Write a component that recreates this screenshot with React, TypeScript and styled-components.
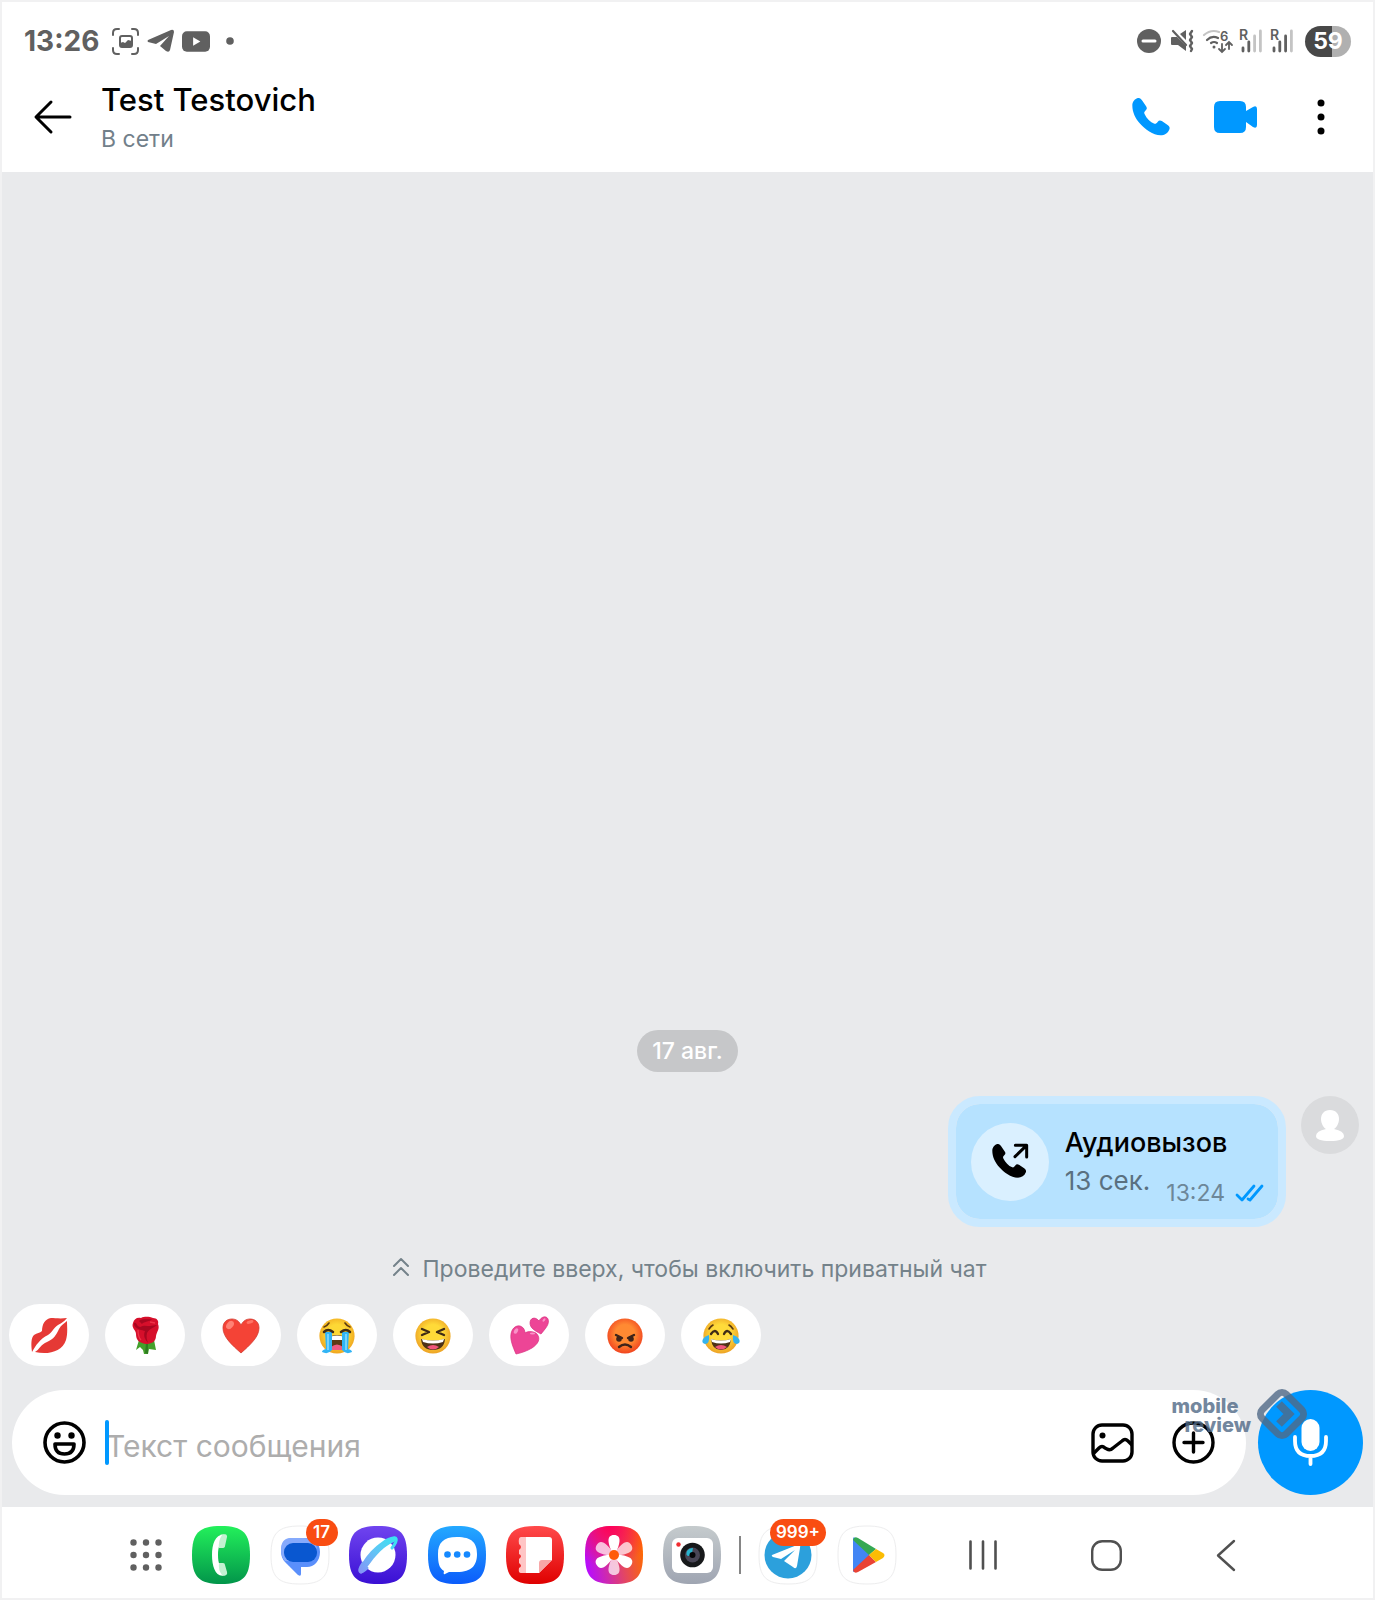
import React from "react";
import styled, { createGlobalStyle } from "styled-components";

const Global = createGlobalStyle`
  * { box-sizing: border-box; }
  body { margin: 0; background: #fff; font-family: Inter, "Liberation Sans", sans-serif; }
  button { border: 0; padding: 0; background: none; font: inherit; color: inherit; cursor: pointer; }
  svg { display: block; flex: none; overflow: visible; }
`;

const Screen = styled.div`
  min-height: 100vh;
  display: flex;
  flex-direction: column;
  border: 2px solid #f1f1f2;
  background: #fff;
`;

const StatusBar = styled.div`
  display: flex;
  align-items: center;
  justify-content: space-between;
  height: 76px;
  padding: 2px 22px 0;
  color: #606060;
`;

const StatusGroup = styled.div<{ $gap: number }>`
  display: flex;
  align-items: center;
  gap: ${(p) => p.$gap}px;
`;

const Clock = styled.time`
  font-size: 28px;
  line-height: 34px;
  font-weight: 700;
  margin-right: 5px;
`;

const Battery = styled.div`
  width: 46px;
  height: 31px;
  margin-left: 4px;
  border-radius: 16px;
  background: linear-gradient(90deg, #484848 58%, #b0b0b0 58%);
  color: #fff;
  font-size: 23px;
  line-height: 31px;
  font-weight: 700;
  text-align: center;
`;

const Header = styled.header`
  display: flex;
  align-items: center;
  height: 94px;
  padding: 0 28px 16px 32px;
`;

const Back = styled.button`
  width: 67px;
`;

const Contact = styled.div`
  flex: 1;
  min-width: 0;
`;

const Name = styled.h1`
  margin: 0;
  font-size: 31px;
  line-height: 44px;
  font-weight: 500;
  color: #000;
`;

const Presence = styled.div`
  font-size: 23px;
  line-height: 34px;
  color: #72808a;
`;

const HeaderActions = styled.div`
  display: flex;
  align-items: center;
  gap: 44px;
`;

const MoreButton = styled.button`
  display: flex;
  justify-content: center;
  width: 48px;
  margin-left: -4px;
`;

const Chat = styled.main`
  flex: 1;
  display: flex;
  flex-direction: column;
  justify-content: flex-end;
  background: #e9eaec;
`;

const DateChip = styled.div`
  align-self: center;
  padding: 0 15px;
  border-radius: 21px;
  background: #c6c7c9;
  color: #fff;
  font-size: 23px;
  line-height: 42px;
  font-weight: 500;
`;

const MessageRow = styled.div`
  display: flex;
  justify-content: flex-end;
  align-items: flex-start;
  gap: 15px;
  padding: 24px 14px 25px;
`;

const Bubble = styled.article`
  display: flex;
  align-items: center;
  gap: 16px;
  height: 131px;
  padding: 0 15px;
  border: 8px solid #cae9ff;
  border-radius: 32px;
  background: #b6e2ff;
  background-clip: padding-box;
`;

const CallBadge = styled.div`
  display: grid;
  place-items: center;
  flex: none;
  width: 78px;
  height: 78px;
  border-radius: 50%;
  background: #daf0ff;
`;

const CallText = styled.div`
  flex: 1;
`;

const CallTitle = styled.div`
  font-size: 27px;
  line-height: 38px;
  font-weight: 500;
  color: #000;
`;

const CallLine = styled.div`
  display: flex;
  justify-content: space-between;
  align-items: flex-start;
  gap: 16px;
`;

const Duration = styled.span`
  font-size: 26px;
  line-height: 38px;
  color: #5a7080;
`;

const Receipt = styled.span`
  display: flex;
  align-items: center;
  gap: 10px;
  height: 38px;
  padding-top: 24px;
  font-size: 23px;
  line-height: 14px;
  color: #6d8799;
`;

const Avatar = styled.div`
  display: grid;
  place-items: center;
  width: 58px;
  height: 58px;
  border-radius: 50%;
  background: #dadbdd;
`;

const Hint = styled.div`
  display: flex;
  justify-content: center;
  align-items: center;
  gap: 14px;
  padding-left: 4px;
  color: #74828a;
  font-size: 23px;
  line-height: 34px;
`;

const Reactions = styled.div`
  display: flex;
  gap: 16px;
  padding: 18px 7px 24px;
`;

const Reaction = styled.button`
  display: grid;
  place-items: center;
  width: 80px;
  height: 62px;
  border-radius: 31px;
  background: #fff;
`;

const Composer = styled.form`
  position: relative;
  display: flex;
  align-items: center;
  gap: 12px;
  padding: 0 10px 12px;
`;

const Field = styled.div`
  flex: 1;
  min-width: 0;
  display: flex;
  align-items: center;
  height: 105px;
  padding: 0 31px;
  border-radius: 53px;
  background: #fff;
`;

const InputWrap = styled.label`
  position: relative;
  flex: 1;
  min-width: 0;
  margin: 0 20px;
`;

const TextInput = styled.input`
  display: block;
  width: 100%;
  height: 46px;
  padding: 6px 0 0;
  border: 0;
  outline: 0;
  background: none;
  font: 400 30px/40px Inter, "Liberation Sans", sans-serif;
  color: #000;
  caret-color: #0098ff;
  &::placeholder { color: #adadad; opacity: 1; }
`;

const Caret = styled.span`
  position: absolute;
  left: -1px;
  top: 0;
  width: 4px;
  height: 45px;
  border-radius: 2px;
  background: #0098ff;
`;

const FieldActions = styled.div`
  display: flex;
  align-items: center;
  gap: 38px;
`;

const MicButton = styled.button`
  display: grid;
  place-items: center;
  width: 105px;
  height: 105px;
  border-radius: 50%;
  background: #0098ff;
`;

const Watermark = styled.div`
  position: absolute;
  right: 64px;
  top: -3px;
  display: flex;
  gap: 4px;
  opacity: 0.8;
  color: #516a87;
  pointer-events: none;
`;

const WatermarkText = styled.div`
  padding-top: 10px;
  font-size: 20px;
  line-height: 19px;
  font-weight: 800;
`;

const WatermarkLine = styled.div<{ $indent?: boolean }>`
  padding-left: ${(p) => (p.$indent ? 13 : 0)}px;
`;

const Dock = styled.nav`
  display: flex;
  align-items: center;
  justify-content: space-between;
  height: 91px;
  padding: 5px 137px 0 128px;
`;

const Apps = styled.div`
  display: flex;
  align-items: center;
`;

const Pinned = styled.div`
  display: flex;
  justify-content: space-between;
  width: 529px;
  margin: 0 18px 0 29px;
`;

const Recent = styled.div`
  display: flex;
  gap: 21px;
  margin-left: 18px;
`;

const AppButton = styled.button`
  position: relative;
  width: 58px;
  height: 58px;
`;

const Badge = styled.span<{ $wide?: boolean }>`
  position: absolute;
  top: -7px;
  left: ${(p) => (p.$wide ? 11 : 35)}px;
  min-width: 32px;
  padding: 0 6px;
  border-radius: 14px;
  background: #f94d12;
  color: #fff;
  font-size: 17px;
  line-height: 27px;
  font-weight: 600;
  text-align: center;
`;

const Divider = styled.span`
  width: 2px;
  height: 38px;
  background: #858585;
`;

const SystemKeys = styled.div`
  display: flex;
  align-items: center;
  justify-content: space-between;
  width: 267px;
`;

const HANDSET =
  "M1 22C1 10 9 2 18 0C24-1 28 4 31 9L42 25C45 30 44 33 40 37C36 41 35 43 37 47C43 60 54 71 66 76C70 77 72 75 76 70C79 66 83 65 88 68L106 80C111 84 112 88 110 93C106 104 96 110 84 110C62 110 38 92 24 76C10 60 1 42 1 22Z";
const SQUIRCLE = "M29 0C51 0 58 7 58 29S51 58 29 58S0 51 0 29S7 0 29 0Z";

const Face = ({ id, inner, outer, children }: { id: string; inner: string; outer: string; children: React.ReactNode }) => (
  <svg width="38" height="38" viewBox="0 0 38 38">
    <defs>
      <radialGradient id={id} cx=".5" cy=".45" r=".55">
        <stop offset=".5" stopColor={inner} />
        <stop offset="1" stopColor={outer} />
      </radialGradient>
    </defs>
    <circle cx="19" cy="20" r="17.6" fill={`url(#${id})`} />
    {children}
  </svg>
);

const Lips = () => (
  <svg width="38" height="38" viewBox="0 0 38 38">
    <path fill="#e53935" d="M2 36C1 28 1 22 4 19C7 17 10 17 12 15C12 8 15 3 21 2C25 2 30 3 37 2C34 6 31 7 28 9C23 12 23 16 18 19C10 23 6 29 2 36Z" />
    <path fill="#e53935" d="M5 36C9 34 11 28 17 26C24 23 26 19 29 13C31 9 35 7 37 5C37 11 38 17 36 24C32 36 18 39 5 36Z" />
  </svg>
);

const Rose = () => (
  <svg width="38" height="38" viewBox="0 0 38 38">
    <path fill="#43a02b" d="M13 24L10 34L14 31L17 34L18 38H22L23 33L30 34L28 24Z" />
    <path fill="#2e7d20" d="M20 27L19 37L22 38L22 28Z" />
    <path fill="#d60f2b" d="M7 7C8 3 11 1 15 2C19 0 24 1 27 2C31 2 33 5 32 8C34 13 31 15 30 20C30 26 25 28 20 28C13 27 10 24 10 18C10 14 5 12 7 7Z" />
    <path fill="#a80720" d="M8 7C11 6 10 10 14 11C18 9 20 10 24 10L31 9C28 12 24 12 21 17C20 21 21 24 22 27C19 23 17 20 19 15C16 14 11 14 8 9Z" />
    <path fill="#a80720" d="M13 5C17 2 22 4 26 3C24 6 18 5 16 8Z" />
    <path fill="none" stroke="#ef3347" strokeWidth="1.3" d="M12 14C12 19 13 22 15 24M24 6L29 7" />
  </svg>
);

const Heart = () => (
  <svg width="38" height="38" viewBox="0 0 38 38">
    <path fill="#f44336" stroke="#d23a30" strokeWidth=".8" d="M19 37C10 29 1 21 1 12C1 6 5 3 10 3C14 3 17 5 19 9C21 5 24 3 28 3C33 3 37 6 37 12C37 21 28 29 19 37Z" />
    <ellipse cx="8" cy="9" rx="3.2" ry="4.6" fill="#ff8274" transform="rotate(40 8 9)" />
    <ellipse cx="28" cy="6" rx="3.5" ry="1.6" fill="#ff7466" transform="rotate(-15 28 6)" />
  </svg>
);

const Hearts = () => (
  <svg width="38" height="38" viewBox="0 0 38 38">
    <path fill="#ed4596" stroke="#d9307f" strokeWidth=".7" d="M6 38C3 31 0 24 1 18C2 11 8 8 12 11C14 12 15 15 15 17C18 15 24 15 27 18C31 23 28 28 22 32C17 35 11 37 6 38Z" />
    <path fill="#ed4596" stroke="#d9307f" strokeWidth=".7" d="M31 18C25 15 20 12 20 7C20 2 25 0 29 5C31 1 36-1 38 3C40 8 35 13 31 18Z" />
    <ellipse cx="6" cy="15" rx="1.8" ry="3" fill="#f991c7" transform="rotate(30 6 15)" />
    <ellipse cx="22.500" cy="17.500" rx="2.600" ry="1" fill="#f991c7" />
    <ellipse cx="34" cy="4" rx="1" ry="2" fill="#f991c7" transform="rotate(40 34 4)" />
  </svg>
);

const Sob = () => (
  <Face id="sob" inner="#fdd835" outer="#f0a51f">
    <path d="M11 21Q19 17 27 21V31Q19 36 11 31Z" fill="#5d3a16" />
    <path d="M11 21Q19 18 27 21L26 24H12Z" fill="#fff" />
    <path d="M13 31Q19 26 25 31L24 34H14Z" fill="#ef5a83" />
    <path d="M7 16H14V34Q10 39 4 36Q4 34 8 33ZM24 16H31L30 33Q34 34 34 36Q28 39 24 34Z" fill="#31b4f5" />
    <path d="M10 18V34M28 18V34" stroke="#8bdcff" strokeWidth="1.500" />
    <path d="M6 16Q10 12 15 16M23 16Q28 12 32 16" fill="none" stroke="#3f2b16" strokeWidth="2.500" strokeLinecap="round" />
    <path d="M6 11Q9 10 11 7M27 7Q29 10 32 11" fill="none" stroke="#5a3a12" strokeWidth="1.600" strokeLinecap="round" />
  </Face>
);

const Laugh = () => (
  <Face id="laugh" inner="#ffda38" outer="#eda225">
    <path d="M7 23Q19 26 31 23Q30 34 19 34Q8 34 7 23Z" fill="#4e3216" />
    <path d="M8 23Q19 26 30 23L29 26Q19 29 9 26Z" fill="#fff" />
    <path d="M13 31Q19 27 25 31Q19 36 13 31Z" fill="#f0567b" />
    <path d="M8 13L15 16L8 19M30 13L23 16L30 19" fill="none" stroke="#3f2b16" strokeWidth="2.400" strokeLinecap="round" strokeLinejoin="round" />
  </Face>
);

const Angry = () => (
  <Face id="angry" inner="#ff8a32" outer="#f1441f">
    <circle cx="13" cy="23" r="2.800" fill="#3f241a" />
    <circle cx="25" cy="23" r="2.800" fill="#3f241a" />
    <path d="M10 19L16 22M28 19L22 22" stroke="#3f241a" strokeWidth="2.400" strokeLinecap="round" />
    <path d="M13 31Q19 26 25 31" fill="none" stroke="#3f241a" strokeWidth="2.400" strokeLinecap="round" />
  </Face>
);

const Joy = () => (
  <Face id="joy" inner="#ffdb3a" outer="#eda225">
    <path d="M9 23Q19 26 29 23Q28 34 19 34Q10 34 9 23Z" fill="#4e3216" />
    <path d="M9 23Q19 26 29 23L28 26Q19 29 10 26Z" fill="#fff" />
    <path d="M13 31Q19 27 25 31Q19 36 13 31Z" fill="#f0567b" />
    <path d="M9 18Q13 12 16 18M22 18Q25 12 29 18" fill="none" stroke="#3f2b16" strokeWidth="2.300" strokeLinecap="round" />
    <path d="M7 13Q9 10 11 9M27 9Q29 10 31 13" fill="none" stroke="#5a3a12" strokeWidth="1.600" strokeLinecap="round" />
    <path d="M7 19Q8 28 3 28Q-1 27 1 23Q3 20 7 19ZM31 19Q30 28 35 28Q39 27 37 23Q35 20 31 19Z" fill="#35b3ee" />
  </Face>
);

const Signal = ({ level }: { level: number }) => (
  <svg width="23" height="24" viewBox="0 0 23 24">
    <text x="0" y="11" fontSize="14" fontWeight="600" fontFamily="Inter, sans-serif" fill="#606060">R</text>
    {[19, 13, 7, 2].map((y, i) => (
      <line key={y} x1={4 + i * 5.8} x2={4 + i * 5.8} y1={y} y2="22" stroke={i < level ? "#606060" : "#c4c4c4"} strokeWidth="2.800" strokeLinecap="round" />
    ))}
  </svg>
);

const Squircle = ({ id, from, to, diagonal, children }: { id: string; from: string; to: string; diagonal?: boolean; children: React.ReactNode }) => (
  <svg width="58" height="58" viewBox="0 0 58 58">
    <defs>
      <linearGradient id={id} x1="0" y1={diagonal ? 0.6 : 0} x2={diagonal ? 1 : 0} y2={diagonal ? 0.4 : 1}>
        <stop offset="0" stopColor={from} />
        <stop offset="1" stopColor={to} />
      </linearGradient>
    </defs>
    <path d={SQUIRCLE} fill={`url(#${id})`} stroke={from === "#fff" ? "#ededee" : "none"} />
    {children}
  </svg>
);

const pinned = [
  {
    name: "Телефон",
    icon: (
      <Squircle id="phone" from="#23f05b" to="#02954a">
        <path d="M35 9C24 6 20 17 20 29S24 53 34 49L35 46C28 44 26 37 26 29S28 14 35 9Z" fill="#fff" />
        <path d="M28 9C31 8 36 9 35 11L33 20Q33 22 30 22H27Q26 15 30 9ZM27 37H31Q33 37 33 39L35 46C36 49 33 50 30 49Q26 44 27 37Z" fill="#c3f1d2" />
      </Squircle>
    ),
  },
  {
    name: "Сообщения Google",
    badge: "17",
    icon: (
      <Squircle id="gmsg" from="#fff" to="#fff">
        <path d="M22 12H34C43 12 49 17 49 26S43 41 36 41H30V48Q30 51 27 49L14 36Q10 32 10 25Q10 12 22 12Z" fill="#5a8ffb" />
        <path d="M20 12H32C42 12 46 17 46 25Q44 33 34 36L14 35Q10 31 10 24Q10 12 20 12Z" fill="#86aafc" />
        <rect x="13" y="17" width="33" height="19" rx="9" fill="#0957d0" />
      </Squircle>
    ),
  },
  {
    name: "Интернет",
    icon: (
      <Squircle id="net" from="#7044ef" to="#3a10d4">
        <defs>
          <linearGradient id="ring" gradientUnits="userSpaceOnUse" x1="10" y1="48" x2="48" y2="10">
            <stop offset="0" stopColor="#8790f7" />
            <stop offset=".5" stopColor="#62c4f5" />
            <stop offset="1" stopColor="#35e6f0" />
          </linearGradient>
        </defs>
        <circle cx="29" cy="29" r="17.500" fill="#fff" />
        <path d="M18 42C11 49 8 46 14 37M40 14C48 9 50 13 43 22" fill="none" stroke="url(#ring)" strokeWidth="3" strokeLinecap="round" />
        <path d="M11 47C8 43 18 27 30 18C38 11 45 9 48 12C49 15 43 16 35 22C24 31 18 43 13 47Q12 48 11 47Z" fill="url(#ring)" />
      </Squircle>
    ),
  },
  {
    name: "Сообщения",
    icon: (
      <Squircle id="msg" from="#24a9ff" to="#0b5cfb">
        <path d="M29 11C44 11 49 17 49 28S44 46 29 46H21L17 48Q15 49 16 45C11 42 10 37 10 28C10 17 15 11 29 11Z" fill="#fff" />
        <circle cx="19.500" cy="28.500" r="3.300" fill="#1589ff" />
        <circle cx="29.200" cy="28.500" r="3.300" fill="#1589ff" />
        <circle cx="39" cy="28.500" r="3.300" fill="#1589ff" />
      </Squircle>
    ),
  },
  {
    name: "Заметки",
    icon: (
      <Squircle id="notes" from="#ff4a4b" to="#df0000">
        <path d="M15 11H20V47H15Q12 47 13 42Q17 40 13 37V33Q17 30 13 28V24Q17 21 13 18Q12 11 15 11Z" fill="#ffc5c5" />
        <path d="M20 11H43Q46 11 46 14V34L33 47H20Z" fill="#fff" />
        <path d="M33 47V37Q33 34 36 34H46Z" fill="#f8a7a7" />
      </Squircle>
    ),
  },
  {
    name: "Галерея",
    icon: (
      <Squircle id="gallery" from="#b70cff" to="#ff6b00" diagonal>
        <defs>
          <radialGradient id="pink" cx=".42" cy="0" r=".72">
            <stop offset="0" stopColor="#ff0058" />
            <stop offset="1" stopColor="#ff0058" stopOpacity="0" />
          </radialGradient>
        </defs>
        <path d={SQUIRCLE} fill="url(#pink)" />
        {[0, 60, 120, 180, 240, 300].map((a) => (
          <path key={a} d="M27 26C23 18 21 9 29 9S35 18 31 26Z" transform={`rotate(${a} 29 29)`} fill="#fff" opacity={a % 120 ? 0.72 : 1} />
        ))}
        <circle cx="29" cy="29" r="5" fill="#ff5a0a" />
      </Squircle>
    ),
  },
  {
    name: "Камера",
    icon: (
      <Squircle id="camera" from="#c5cbcd" to="#9fa5b2">
        <rect x="9" y="12" width="41" height="35" rx="6" fill="#fff" />
        <circle cx="15.500" cy="18.500" r="2.200" fill="#f02b30" />
        <circle cx="29.500" cy="29" r="12.300" fill="#17191b" />
        <circle cx="29.500" cy="29" r="7.500" fill="#494656" />
        <path d="M24 25Q26 22 30 22L29 27L26 30Q22 30 24 25Z" fill="#28b5cf" />
        <circle cx="29.500" cy="29" r="3" fill="#050608" />
      </Squircle>
    ),
  },
];

const recent = [
  {
    name: "Telegram",
    badge: "999+",
    icon: (
      <Squircle id="tg" from="#fff" to="#fff">
        <circle cx="29" cy="29" r="23.500" fill="#2ca0dc" />
        <path d="M13 29L38 19Q42 17 41 22L38 40Q37 44 34 41L25 35L36 24L22 33L14 31Q12 30 13 29Z" fill="#fff" />
      </Squircle>
    ),
  },
  {
    name: "Google Play",
    icon: (
      <Squircle id="play" from="#fff" to="#fff">
        <path d="M15 13V45Q15 46 16 46L32 29L16 11Q15 12 15 13Z" fill="#4285f4" />
        <path d="M15 14Q16 10 20 12L38 23L31 29Z" fill="#34a853" />
        <path d="M15 44Q16 48 20 46L38 36L31 29Z" fill="#ea4335" />
        <path d="M38 23L45 27Q48 29 45 32L38 36L31 29Z" fill="#fbbc04" />
      </Squircle>
    ),
  },
];

const reactions = [
  ["Поцелуй", <Lips />],
  ["Роза", <Rose />],
  ["Сердце", <Heart />],
  ["Плач", <Sob />],
  ["Смех", <Laugh />],
  ["Сердца", <Hearts />],
  ["Злость", <Angry />],
  ["До слёз", <Joy />],
] as const;

export default function App() {
  return (
    <Screen>
      <Global />
      <StatusBar>
        <StatusGroup $gap={8}>
          <Clock>13:26</Clock>
          <svg width="27" height="27" viewBox="0 0 27 27" fill="none" stroke="#606060" strokeWidth="2" strokeLinecap="round">
            <path d="M1 7V5Q1 1 5 1H7M20 1H22Q26 1 26 5V7M26 20V22Q26 26 22 26H20M7 26H5Q1 26 1 22V20" />
            <rect x="8" y="8" width="12" height="11" rx="2" />
            <path d="M8 17V15L11 14L13 15L16 12L20 13V18H8Z" fill="#606060" stroke="none" />
          </svg>
          <svg width="27" height="24" viewBox="0 0 27 24">
            <path d="M1 11L24 1Q27 0 27 3L23 21Q22 24 19 22L13 17L22 7L9 15L1 13Q0 12 1 11Z" fill="#606060" />
          </svg>
          <svg width="28" height="21" viewBox="0 0 29 21">
            <rect width="29" height="21" rx="5" fill="#606060" />
            <path d="M11.500 6V15L19 10.500Z" fill="#fff" />
          </svg>
          <svg width="24" height="8" viewBox="0 0 24 8">
            <circle cx="12" cy="4" r="3.800" fill="#606060" />
          </svg>
        </StatusGroup>
        <StatusGroup $gap={8}>
          <svg width="24" height="24" viewBox="0 0 24 24">
            <circle cx="12" cy="12" r="12" fill="#606060" />
            <path d="M6 12H18" stroke="#fff" strokeWidth="3" strokeLinecap="round" />
          </svg>
          <svg width="26" height="24" viewBox="-2 0 26 24">
            <path d="M1 8H6L15 17V22L7 16H1Q0 16 0 15V9Q0 8 1 8ZM9 5L15 1V11Z" fill="#606060" />
            <path d="M2 2L15 16" stroke="#606060" strokeWidth="2.200" strokeLinecap="round" />
            <path d="M21 2L19 5L21 8L19 11L21 14L19 17L21 20L20 22" fill="none" stroke="#606060" strokeWidth="2.400" strokeLinecap="round" strokeLinejoin="round" />
          </svg>
          <svg width="28" height="24" viewBox="0 0 28 24" fill="none" strokeLinecap="round" strokeWidth="2.200">
            <path d="M1 6Q8 0 16 3" stroke="#c4c4c4" />
            <path d="M4 11Q9 6 15 9M8 14Q11 12 14 14" stroke="#606060" />
            <circle cx="11" cy="18" r="1.500" fill="#606060" />
            <path d="M19 15V22M16 20L19 23L22 20M26 20V13M23 16L26 13L29 16" stroke="#606060" strokeWidth="1.800" />
            <text x="17" y="12" fontSize="13" fontWeight="600" fontFamily="Inter, sans-serif" fill="#606060">6</text>
          </svg>
          <Signal level={2} />
          <Signal level={3} />
          <Battery>59</Battery>
        </StatusGroup>
      </StatusBar>

      <Header>
        <Back aria-label="Назад">
          <svg width="38" height="34" viewBox="0 0 38 34" fill="none" stroke="#000" strokeWidth="3" strokeLinecap="round" strokeLinejoin="round">
            <path d="M36 17H3M17 2L2 17L17 32" />
          </svg>
        </Back>
        <Contact>
          <Name>Test Testovich</Name>
          <Presence>В сети</Presence>
        </Contact>
        <HeaderActions>
          <button aria-label="Аудиозвонок">
            <svg width="38" height="38" viewBox="0 0 112 112"><path d={HANDSET} fill="#0098ff" /></svg>
          </button>
          <button aria-label="Видеозвонок">
            <svg width="43" height="32" viewBox="0 0 43 32">
              <path d="M6 0H26Q32 0 32 6V10L39 6Q43 4 43 8V24Q43 28 39 26L32 21V26Q32 32 26 32H6Q0 32 0 26V6Q0 0 6 0Z" fill="#0098ff" />
            </svg>
          </button>
          <MoreButton aria-label="Ещё">
            <svg width="8" height="36" viewBox="0 0 8 36">
              <circle cx="4" cy="4" r="3.500" /><circle cx="4" cy="18" r="3.500" /><circle cx="4" cy="32" r="3.500" />
            </svg>
          </MoreButton>
        </HeaderActions>
      </Header>

      <Chat>
        <DateChip>17 авг.</DateChip>
        <MessageRow>
          <Bubble>
            <CallBadge>
              <svg width="36" height="36" viewBox="0 0 108 108">
                <path d={HANDSET} transform="scale(.92)" />
                <path d="M69 38L103 5M70 4H104V39" fill="none" stroke="#000" strokeWidth="9" strokeLinecap="round" strokeLinejoin="round" />
              </svg>
            </CallBadge>
            <CallText>
              <CallTitle>Аудиовызов</CallTitle>
              <CallLine>
                <Duration>13 сек.</Duration>
                <Receipt>
                  13:24
                  <svg width="28" height="18" viewBox="0 0 28 18" fill="none" stroke="#0098ff" strokeWidth="2.800" strokeLinecap="round" strokeLinejoin="round">
                    <path d="M2 11L7 16L19 2M13 15L15 16L27 2" />
                  </svg>
                </Receipt>
              </CallLine>
            </CallText>
          </Bubble>
          <Avatar>
            <svg width="28" height="31" viewBox="0 0 28 31" fill="#fff">
              <path d="M14 0C20 0 23 4 23 9C23 14 20 18 18 19Q28 21 28 26Q28 31 14 31Q0 31 0 26Q0 21 10 19C8 18 5 14 5 9C5 4 8 0 14 0Z" />
            </svg>
          </Avatar>
        </MessageRow>
        <Hint>
          <svg width="16" height="22" viewBox="0 0 16 22" fill="none" stroke="#74828a" strokeWidth="2" strokeLinecap="round" strokeLinejoin="round">
            <path d="M1 8L8 1L15 8M1 17L8 10L15 17" />
          </svg>
          Проведите вверх, чтобы включить приватный чат
        </Hint>
        <Reactions>
          {reactions.map(([label, icon]) => (
            <Reaction key={label} aria-label={label}>{icon}</Reaction>
          ))}
        </Reactions>
        <Composer onSubmit={(e) => e.preventDefault()}>
          <Field>
            <button type="button" aria-label="Эмодзи">
              <svg width="43" height="43" viewBox="0 0 43 43" fill="none" stroke="#000" strokeWidth="3.600" strokeLinejoin="round">
                <circle cx="21.500" cy="21.500" r="19.500" />
                <circle cx="14.500" cy="14.500" r="3.200" fill="#000" stroke="none" />
                <circle cx="28.500" cy="14.500" r="3.200" fill="#000" stroke="none" />
                <path d="M12 23H31Q31 33 21.500 33T12 23Z" />
              </svg>
            </button>
            <InputWrap>
              <Caret />
              <TextInput placeholder="Текст сообщения" aria-label="Текст сообщения" />
            </InputWrap>
            <FieldActions>
              <button type="button" aria-label="Фото">
                <svg width="43" height="40" viewBox="0 0 43 40" fill="none" stroke="#000" strokeWidth="3.400" strokeLinejoin="round">
                  <rect x="2" y="2" width="39" height="36" rx="9" />
                  <circle cx="11.500" cy="12.500" r="3" fill="#000" stroke="none" />
                  <path d="M2 31L8 25Q11 22 14 25L16 26Q19 28 22 25L31 18Q34 15 37 18L41 22" />
                </svg>
              </button>
              <button type="button" aria-label="Добавить">
                <svg width="43" height="43" viewBox="0 0 43 43" fill="none" stroke="#000" strokeWidth="3.400" strokeLinecap="round">
                  <circle cx="21.500" cy="21.500" r="19.500" />
                  <path d="M12 21.500H31M21.500 12V31" />
                </svg>
              </button>
            </FieldActions>
          </Field>
          <MicButton type="button" aria-label="Голосовое сообщение">
            <svg width="35" height="47" viewBox="0 0 35 47">
              <rect x="8.500" y="0" width="18" height="32" rx="9" fill="#fff" />
              <path d="M2 18V22Q2 37 17.500 37T33 22V18M17.500 37V45" fill="none" stroke="#fff" strokeWidth="3.800" strokeLinecap="round" />
            </svg>
          </MicButton>
          <Watermark>
            <WatermarkText>
              <WatermarkLine>mobile</WatermarkLine>
              <WatermarkLine $indent>review</WatermarkLine>
            </WatermarkText>
            <svg width="54" height="54" viewBox="0 0 54 54" fill="none" stroke="#516a87" strokeWidth="7">
              <rect x="10" y="10" width="34" height="34" rx="6" transform="rotate(45 27 27)" />
              <path d="M24 17L34 27L24 37" strokeWidth="8" />
            </svg>
          </Watermark>
        </Composer>
      </Chat>

      <Dock>
        <Apps>
          <button aria-label="Все приложения">
            <svg width="33" height="33" viewBox="0 0 33 33" fill="#606060">
              {[3.5, 16, 28.5].map((y) => [3.5, 16, 28.5].map((x) => <circle key={`${x}-${y}`} cx={x} cy={y} r="3.200" />))}
            </svg>
          </button>
          <Pinned>
            {pinned.map((a) => (
              <AppButton key={a.name} aria-label={a.name}>{a.icon}{a.badge && <Badge>{a.badge}</Badge>}</AppButton>
            ))}
          </Pinned>
          <Divider />
          <Recent>
            {recent.map((a) => (
              <AppButton key={a.name} aria-label={a.name}>{a.icon}{a.badge && <Badge $wide>{a.badge}</Badge>}</AppButton>
            ))}
          </Recent>
        </Apps>
        <SystemKeys>
          <button aria-label="Недавние">
            <svg width="28" height="30" viewBox="0 0 28 30" stroke="#505050" strokeWidth="2.600" strokeLinecap="round"><path d="M1.500 1.500V28.500M14 1.500V28.500M26.500 1.500V28.500" /></svg>
          </button>
          <button aria-label="Домой">
            <svg width="31" height="31" viewBox="0 0 31 31" fill="none" stroke="#505050" strokeWidth="2.400"><rect x="1.200" y="1.200" width="28.600" height="28.600" rx="10" /></svg>
          </button>
          <button aria-label="Назад в системе">
            <svg width="20" height="31" viewBox="0 0 20 31" fill="none" stroke="#505050" strokeWidth="2.400" strokeLinecap="round" strokeLinejoin="round"><path d="M18 1L2 15.500L18 30" /></svg>
          </button>
        </SystemKeys>
      </Dock>
    </Screen>
  );
}
